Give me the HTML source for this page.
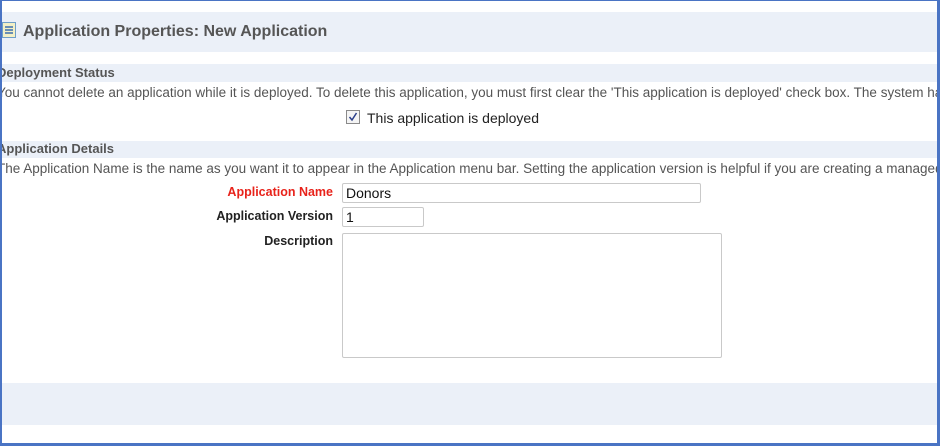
<!DOCTYPE html>
<html><head><meta charset="utf-8"><style>
*{margin:0;padding:0;box-sizing:border-box}
html,body{width:940px;height:446px;overflow:hidden;background:#fff}
body{font-family:"Liberation Sans",Arial,sans-serif;font-size:12px;color:#555;position:relative}
.frame{position:absolute;left:0;top:0;width:940px;height:446px;border:2px solid #4a74c4;border-top-width:1px;border-bottom-width:3px;border-right-width:3px;z-index:10;pointer-events:none}
.abs{position:absolute;white-space:nowrap}
.band{position:absolute;left:2px;right:3px;background:#ebf0f8}
.lbl{position:absolute;right:607px;font-weight:bold;color:#222;text-align:right;font-size:12.5px;white-space:nowrap}
input,textarea{position:absolute;border:1px solid #c9c9c9;border-radius:2px;background:#fff;font-family:"Liberation Sans",Arial,sans-serif;font-size:14px;color:#111;padding:0 3px}
textarea{resize:none}
</style></head><body>
<div class="frame"></div>
<div class="band" style="top:12px;height:40px"></div>
<svg class="abs" style="left:2px;top:22px" width="15" height="17" viewBox="0 0 15 17"><rect x="0.5" y="0.5" width="13" height="15" fill="#f3f0c6" stroke="#6f9fc8"/><path d="M3 5h8M3 8h8M3 11h8" stroke="#3d6fae" stroke-width="1.4"/></svg>
<div class="abs" style="left:23px;top:23px;font-size:16px;font-weight:bold;color:#555">Application Properties: New Application</div>
<div class="band" style="top:64px;height:18px"></div>
<div class="abs" style="left:-3px;top:65px;font-weight:bold;font-size:13px;color:#555">Deployment Status</div>
<div class="abs" style="left:-3px;top:85px;font-size:13.5px;color:#555">You cannot delete an application while it is deployed. To delete this application, you must first clear the 'This application is deployed' check box. The system has</div>
<svg class="abs" style="left:346px;top:110px" width="14" height="14" viewBox="0 0 14 14"><rect x="0.5" y="0.5" width="13" height="13" fill="#f4f4f4" stroke="#8a8a8a"/><path d="M3.5 7l2.5 3 4.5-7" fill="none" stroke="#2b3f8a" stroke-width="1.5"/></svg>
<div class="abs" style="left:367px;top:110px;font-size:14px;color:#222">This application is deployed</div>
<div class="band" style="top:141px;height:17px"></div>
<div class="abs" style="left:-3px;top:141px;font-weight:bold;font-size:13px;color:#555">Application Details</div>
<div class="abs" style="left:-3px;top:161px;font-size:13.5px;color:#555">The Application Name is the name as you want it to appear in the Application menu bar. Setting the application version is helpful if you are creating a managed</div>
<div class="lbl" style="top:185px;color:#e8231b">Application Name</div>
<input style="left:342px;top:183px;width:359px;height:20px" value="Donors">
<div class="lbl" style="top:209px">Application Version</div>
<input style="left:342px;top:207px;width:82px;height:20px" value="1">
<div class="lbl" style="top:234px">Description</div>
<textarea style="left:342px;top:233px;width:380px;height:125px"></textarea>
<div class="band" style="top:383px;height:42px"></div>
</body></html>
